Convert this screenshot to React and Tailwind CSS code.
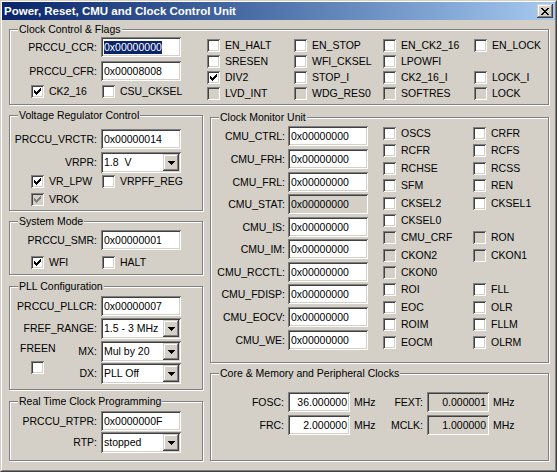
import React from 'react';

const sunken =
  'shadow-[inset_1px_1px_0_#808080,inset_-1px_-1px_0_#ffffff,inset_2px_2px_0_#404040,inset_-2px_-2px_0_#d4d0c8]';
const raised =
  'shadow-[inset_-1px_-1px_0_#404040,inset_1px_1px_0_#d4d0c8,inset_-2px_-2px_0_#808080,inset_2px_2px_0_#ffffff]';

function Check({ color }) {
  return (
    <svg width="7" height="7" viewBox="0 0 7 7" shapeRendering="crispEdges" fill={color}>
      <path d="M0 2h1v3H0zM1 3h1v3H1zM2 4h1v3H2zM3 3h1v3H3zM4 2h1v3H4zM5 1h1v3H5zM6 0h1v3H6z" />
    </svg>
  );
}

function Arrow() {
  return (
    <svg width="7" height="4" viewBox="0 0 7 4" shapeRendering="crispEdges" fill="#000">
      <path d="M0 0h7v1H0zM1 1h5v1H1zM2 2h3v1H2zM3 3h1v1H3z" />
    </svg>
  );
}

function CheckBox({ checked, disabled }) {
  return (
    <span
      className={`flex h-[13px] w-[13px] shrink-0 items-center justify-center ${sunken} ${
        disabled ? 'bg-[#d4d0c8]' : 'bg-white'
      }`}
    >
      {checked && <Check color={disabled ? '#808080' : '#000000'} />}
    </span>
  );
}

function Flag({ label, checked, disabled, className = '' }) {
  if (!label) return <div className={className} />;
  return (
    <div className={`flex h-[13px] items-center ${className}`}>
      <CheckBox checked={checked} disabled={disabled} />
      <span className="ml-[5px] whitespace-nowrap">{label}</span>
    </div>
  );
}

function Field({ value, disabled, right, selected, className = 'w-[80px]' }) {
  return (
    <div
      className={`flex h-[20px] shrink-0 items-center whitespace-nowrap ${sunken} ${
        disabled ? 'bg-[#d4d0c8]' : 'bg-white'
      } ${right ? 'justify-end pr-[3px]' : 'pl-[3px]'} ${className}`}
    >
      {selected ? <span className="bg-[#0a246a] text-white">{value}</span> : value}
    </div>
  );
}

function Select({ value }) {
  return (
    <div className={`flex h-[21px] w-[80px] shrink-0 items-center justify-between bg-white p-[2px] ${sunken}`}>
      <span className="pl-[1px] whitespace-nowrap">{value}</span>
      <span className={`flex h-[17px] w-[16px] items-center justify-center bg-[#d4d0c8] ${raised}`}>
        <Arrow />
      </span>
    </div>
  );
}

function Group({ title, className = '', children }) {
  return (
    <div className={`relative border border-[#808080] shadow-[inset_1px_1px_0_#ffffff,1px_1px_0_#ffffff] ${className}`}>
      <span className="absolute left-[8px] top-[-7px] bg-[#d4d0c8] px-[1px] whitespace-nowrap">{title}</span>
      {children}
    </div>
  );
}

function Row({ label, labelW = 'w-[87px]', gap = 'ml-[4px]', className = '', children }) {
  return (
    <div className={`flex items-center ${className}`}>
      <span className={`${labelW} shrink-0 text-right whitespace-nowrap`}>{label}</span>
      <div className={gap}>{children}</div>
    </div>
  );
}

const flags = [
  ['EN_HALT', 'EN_STOP', 'EN_CK2_16', 'EN_LOCK'],
  ['SRESEN', 'WFI_CKSEL', 'LPOWFI', ''],
  ['DIV2', 'STOP_I', 'CK2_16_I', 'LOCK_I'],
  ['LVD_INT', 'WDG_RES0', 'SOFTRES', 'LOCK'],
];

const cmuRegs = [
  ['CMU_CTRL:', ''],
  ['CMU_FRH:', 'mt-[3px]'],
  ['CMU_FRL:', 'mt-[3px]'],
  ['CMU_STAT:', 'mt-[2px]'],
  ['CMU_IS:', 'mt-[3px]'],
  ['CMU_IM:', 'mt-[2px]'],
  ['CMU_RCCTL:', 'mt-[3px]'],
  ['CMU_FDISP:', 'mt-[2px]'],
  ['CMU_EOCV:', 'mt-[3px]'],
  ['CMU_WE:', 'mt-[3px]'],
];

const cmuFlags = [
  ['OSCS', 'CRFR'],
  ['RCFR', 'RCFS'],
  ['RCHSE', 'RCSS'],
  ['SFM', 'REN'],
  ['CKSEL2', 'CKSEL1'],
  ['CKSEL0', ''],
  ['CMU_CRF', 'RON'],
  ['CKON2', 'CKON1'],
  ['CKON0', ''],
  ['ROI', 'FLL'],
  ['EOC', 'OLR'],
  ['ROIM', 'FLLM'],
  ['EOCM', 'OLRM'],
];
const cmuDisabled = ['CMU_CRF', 'CKON2', 'CKON0', 'RON', 'CKON1'];

export default function App() {
  return (
    <div className="h-[472px] w-[557px] border border-t-[#d4d0c8] border-l-[#d4d0c8] border-r-[#404040] border-b-[#404040] bg-[#d4d0c8] font-['Liberation_Sans',Arial,sans-serif] text-[10.5px] leading-[13px] text-black">
      <div className="flex h-full flex-col border border-t-white border-l-white border-r-[#808080] border-b-[#808080]">
        {/* title bar */}
        <div className="flex h-[18px] items-center justify-between bg-linear-to-r from-[#0a246a] to-[#a6caf0] pl-[2px] pr-[2px]">
          <span className="text-[11.5px] font-bold leading-[18px] text-white whitespace-nowrap">
            Power, Reset, CMU and Clock Control Unit
          </span>
          <span className={`flex h-[14px] w-[16px] items-center justify-center bg-[#d4d0c8] ${raised}`}>
            <svg width="8" height="7" viewBox="0 0 8 7" shapeRendering="crispEdges" fill="#000">
              <path d="M0 0h2v1H0zM6 0h2v1H6zM1 1h2v1H1zM5 1h2v1H5zM2 2h4v1H2zM3 3h2v1H3zM2 4h4v1H2zM1 5h2v1H1zM5 5h2v1H5zM0 6h2v1H0zM6 6h2v1H6z" />
            </svg>
          </span>
        </div>

        <div className="pl-[7px] pt-[9px]">
          {/* Clock Control & Flags */}
          <Group title="Clock Control & Flags" className="h-[76px] w-[540px]">
            <div className="flex">
              <div className="w-[197px] pt-[7px]">
                <Row label="PRCCU_CCR:">
                  <Field value="0x00000000" selected />
                </Row>
                <Row label="PRCCU_CFR:" className="mt-[4px]">
                  <Field value="0x00008008" />
                </Row>
                <div className="mt-[4px] flex pl-[21px]">
                  <Flag label="CK2_16" checked className="w-[71px]" />
                  <Flag label="CSU_CKSEL" />
                </div>
              </div>
              <div className="grid grid-cols-[87px_89px_91px_70px] gap-y-[3px] pt-[9px]">
                {flags.map((row, r) =>
                  row.map((f, c) => (
                    <Flag key={`${r}-${c}`} label={f} checked={f === 'DIV2'} disabled={r === 3} />
                  ))
                )}
              </div>
            </div>
          </Group>

          <div className="flex gap-[7px]">
            {/* left column */}
            <div className="mt-[10px] w-[194px]">
              <Group title="Voltage Regulator Control" className="h-[96px]">
                <div className="pt-[13px]">
                  <Row label="PRCCU_VRCTR:">
                    <Field value="0x00000014" />
                  </Row>
                  <Row label="VRPR:" className="mt-[3px]">
                    <Select value={'1.8\u00a0\u00a0V'} />
                  </Row>
                  <div className="mt-[2px] flex pl-[21px]">
                    <Flag label="VR_LPW" checked className="w-[71px]" />
                    <Flag label="VRPFF_REG" />
                  </div>
                  <div className="mt-[5px] flex pl-[21px]">
                    <Flag label="VROK" checked disabled />
                  </div>
                </div>
              </Group>

              <Group title="System Mode" className="mt-[10px] h-[54px]">
                <div className="pt-[8px]">
                  <Row label="PRCCU_SMR:">
                    <Field value="0x00000001" />
                  </Row>
                  <div className="mt-[6px] flex pl-[21px]">
                    <Flag label="WFI" checked className="w-[71px]" />
                    <Flag label="HALT" />
                  </div>
                </div>
              </Group>

              <Group title="PLL Configuration" className="mt-[11px] h-[104px]">
                <div className="pt-[9px]">
                  <Row label="PRCCU_PLLCR:">
                    <Field value="0x00000007" />
                  </Row>
                  <Row label="FREF_RANGE:" className="mt-[2px]">
                    <Select value="1.5 - 3 MHz" />
                  </Row>
                  <div className="mt-[2px] flex">
                    <div className="w-[55px] shrink-0 pt-[1px]">
                      <div className="pl-[10px]">FREEN</div>
                      <div className="ml-[21px] mt-[6px]">
                        <CheckBox />
                      </div>
                    </div>
                    <div>
                      <Row label="MX:" labelW="w-[32px]">
                        <Select value="Mul by 20" />
                      </Row>
                      <Row label="DX:" labelW="w-[32px]" className="mt-[1px]">
                        <Select value="PLL Off" />
                      </Row>
                    </div>
                  </div>
                </div>
              </Group>

              <Group title="Real Time Clock Programming" className="mt-[11px] h-[60px]">
                <div className="pt-[9px]">
                  <Row label="PRCCU_RTPR:">
                    <Field value="0x0000000F" />
                  </Row>
                  <Row label="RTP:" className="mt-[1px]">
                    <Select value="stopped" />
                  </Row>
                </div>
              </Group>
            </div>

            {/* right column */}
            <div className="mt-[12px] w-[339px]">
              <Group title="Clock Monitor Unit" className="h-[246px]">
                <div className="flex">
                  <div className="w-[157px] shrink-0 pt-[8px]">
                    {cmuRegs.map(([label, mt]) => (
                      <Row key={label} label={label} labelW="w-[74px]" gap="ml-[3px]" className={mt}>
                        <Field value="0x00000000" disabled={label === 'CMU_STAT:'} />
                      </Row>
                    ))}
                  </div>
                  <div className="ml-[15px] grid grid-cols-[90px_70px] gap-y-[3px] pt-[9px]">
                    {cmuFlags.map((row, r) =>
                      row.map((f, c) => (
                        <Flag key={`${r}-${c}`} label={f} disabled={cmuDisabled.includes(f)} />
                      ))
                    )}
                  </div>
                </div>
              </Group>

              <Group title="Core & Memory and Peripheral Clocks" className="mt-[10px] h-[88px]">
                <div className="pt-[18px]">
                  {[
                    ['FOSC:', '36.000000', 'FEXT:', '0.000001', ''],
                    ['FRC:', '2.000000', 'MCLK:', '1.000000', 'mt-[3px]'],
                  ].map(([l1, v1, l2, v2, mt]) => (
                    <div key={l1} className={`flex items-center ${mt}`}>
                      <span className="w-[73px] text-right">{l1}</span>
                      <Field value={v1} right className="ml-[4px] w-[62px]" />
                      <span className="ml-[4px] w-[21px]">MHz</span>
                      <span className="w-[48px] text-right">{l2}</span>
                      <Field value={v2} right disabled className="ml-[4px] w-[62px]" />
                      <span className="ml-[4px]">MHz</span>
                    </div>
                  ))}
                </div>
              </Group>
            </div>
          </div>
        </div>
      </div>
    </div>
  );
}
